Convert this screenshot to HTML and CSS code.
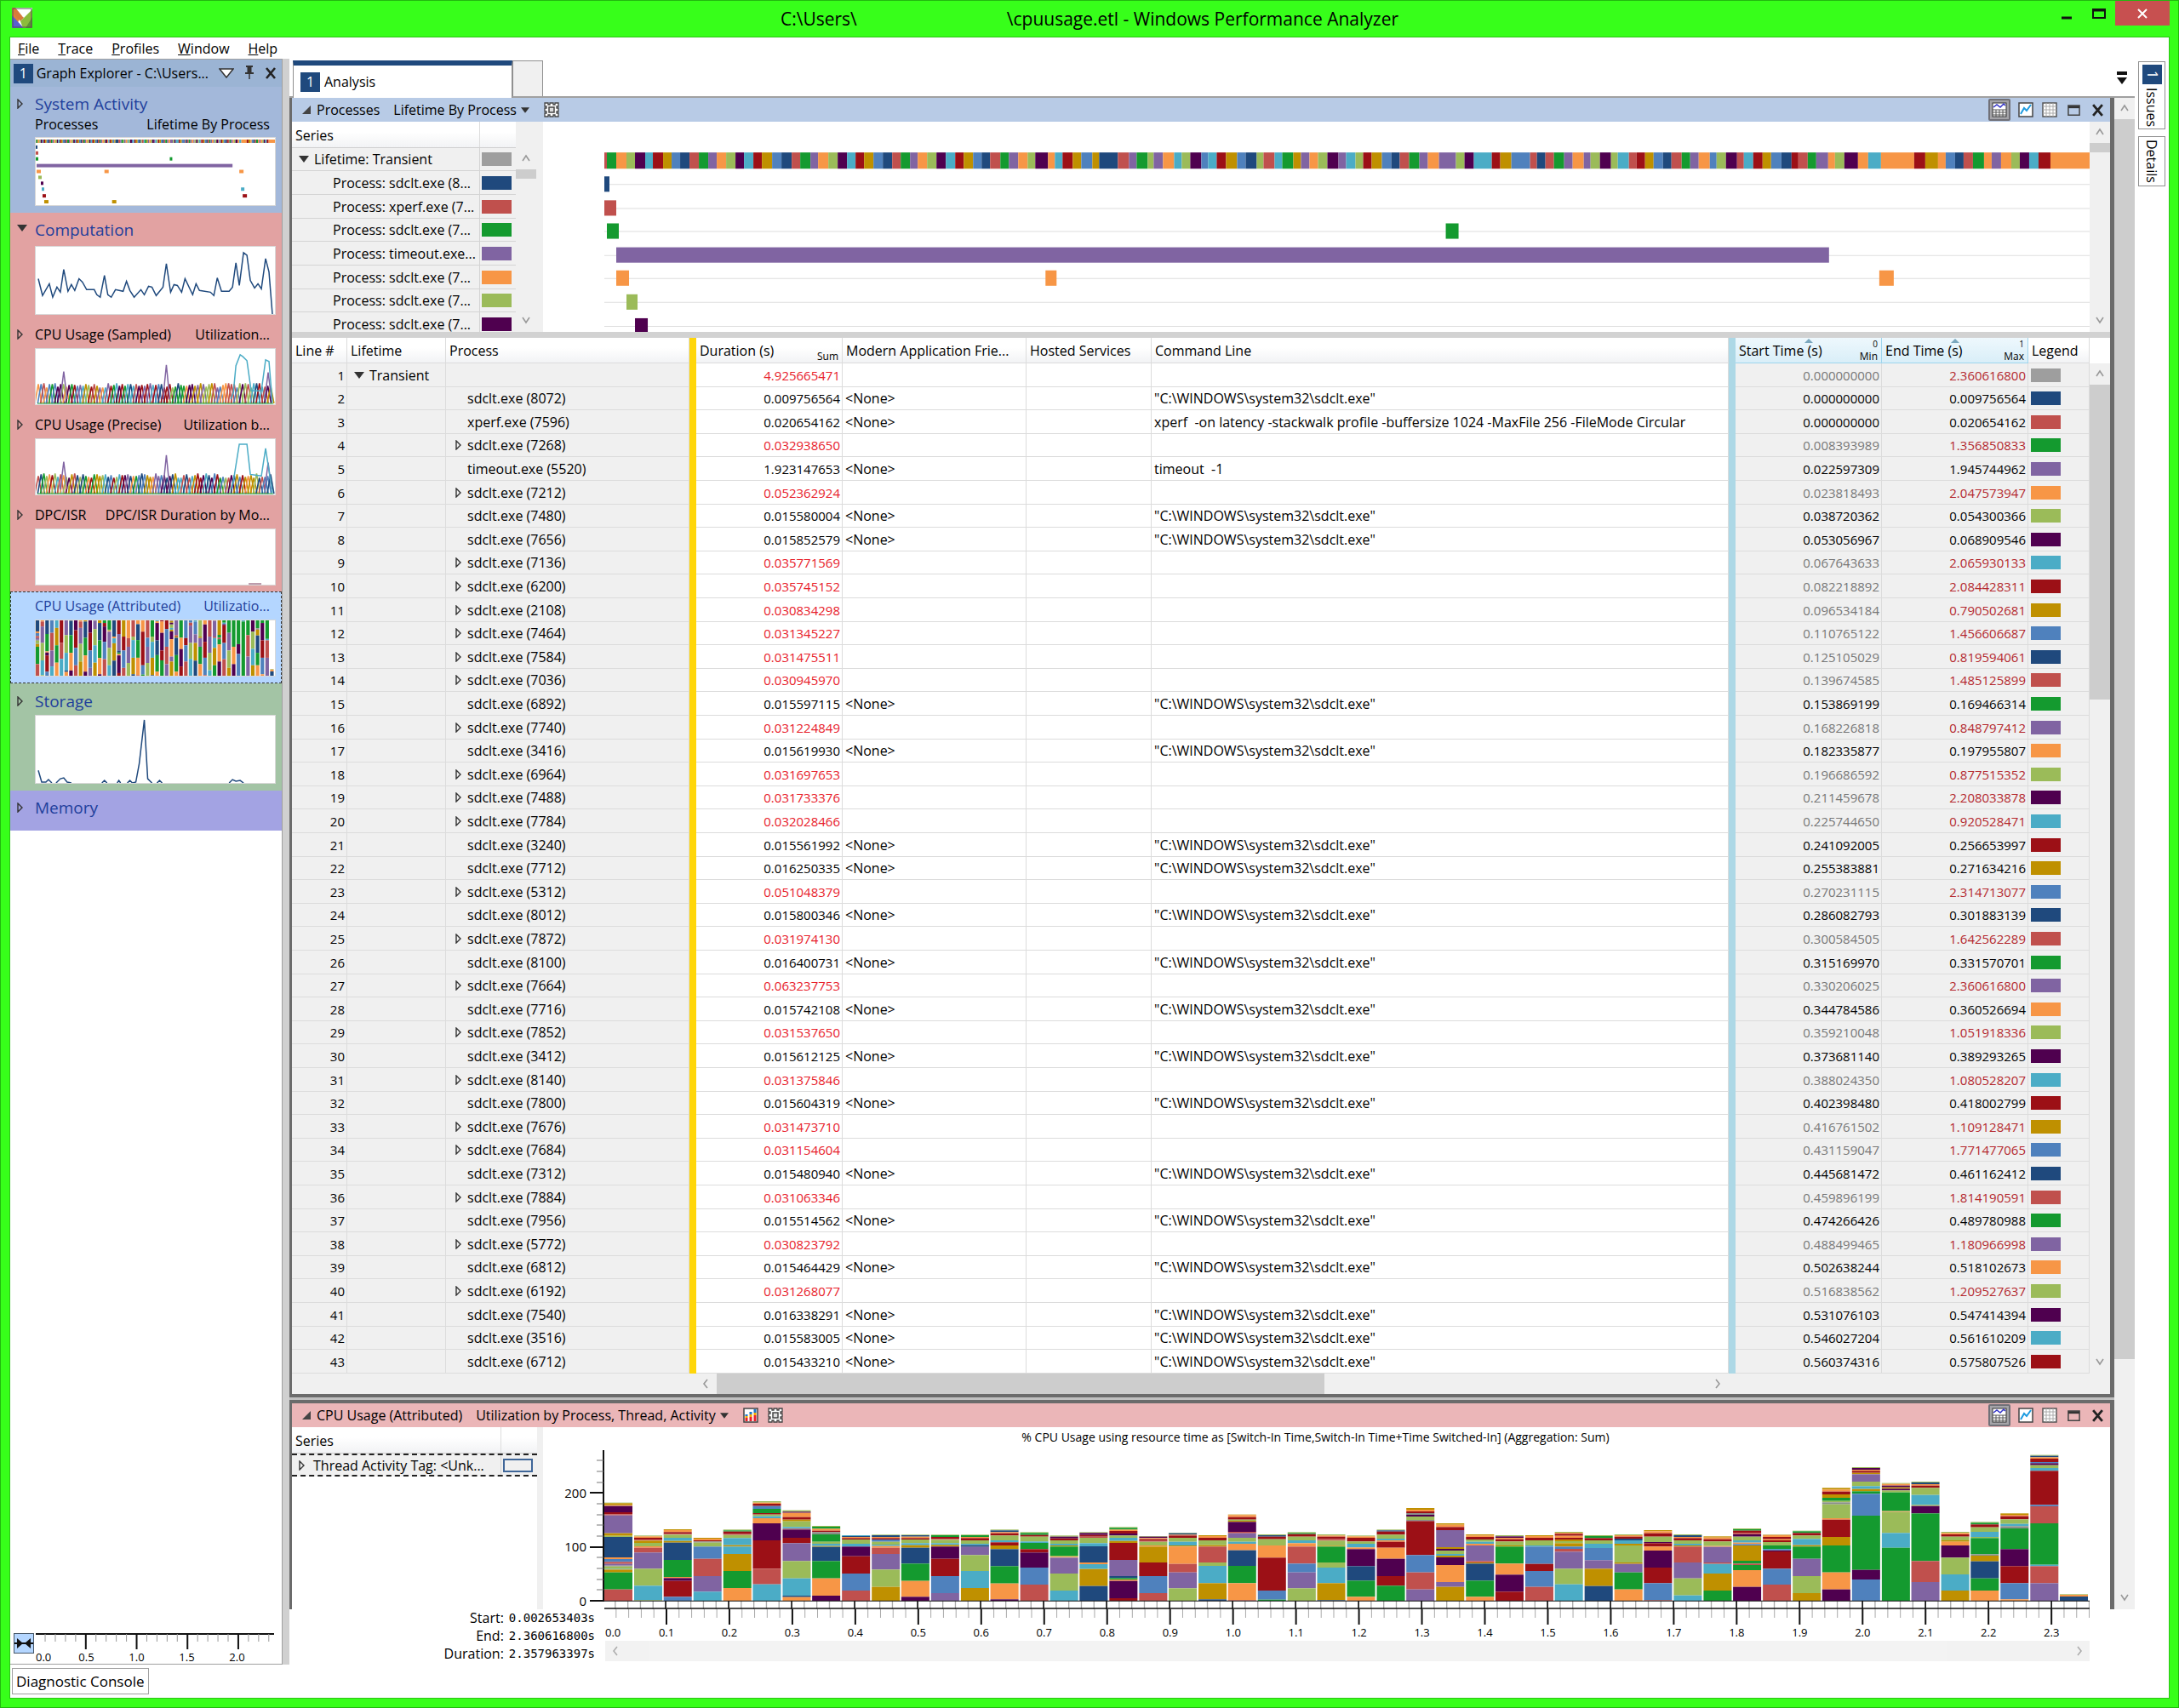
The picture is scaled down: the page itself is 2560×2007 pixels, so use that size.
FILE: index.html
```html
<!DOCTYPE html>
<html lang="en">
<head>
    <meta charset="UTF-8">
    <meta name="viewport" content="width=device-width, initial-scale=1.0">
    <title>Windows Performance Analyzer</title>
    <link rel="stylesheet" href="styles.css">
</head>
<body>
    <svg class="defs" aria-hidden="true">
        <symbol id="i-closed" viewBox="0 0 8 12"><path d="M1 1V11L6 6Z" fill="none" stroke="#333" stroke-width="1.4"/></symbol>
        <symbol id="i-open" viewBox="0 0 12 8"><path d="M0 0H12L6 8Z" fill="#333"/></symbol>
        <symbol id="i-corner" viewBox="0 0 10 10"><path d="M10 0V10H0Z" fill="#444"/></symbol>
        <symbol id="i-up" viewBox="0 0 12 12"><path d="M2 9L6 3L10 9" fill="none" stroke="#999" stroke-width="1.6"/></symbol>
        <symbol id="i-down" viewBox="0 0 12 12"><path d="M2 3L6 9L10 3" fill="none" stroke="#999" stroke-width="1.6"/></symbol>
        <symbol id="i-left" viewBox="0 0 12 12"><path d="M8 1L4 6L8 11" fill="none" stroke="#999" stroke-width="1.6"/></symbol>
        <symbol id="i-right" viewBox="0 0 12 12"><path d="M4 1L8 6L4 11" fill="none" stroke="#999" stroke-width="1.6"/></symbol>
        <symbol id="i-x" viewBox="0 0 14 14"><path d="M2 1L12 13M12 1L2 13" stroke="#222" stroke-width="2.6"/></symbol>
        <symbol id="i-gear" viewBox="0 0 18 18">
            <path d="M1 1H5V3H7V1H11V3H13V1H17V5H15V7H17V11H15V13H17V17H13V15H11V17H7V15H5V17H1V13H3V11H1V7H3V5H1Z" fill="#fff" stroke="#444" stroke-width="1.3"/>
            <rect x="6" y="6" width="6" height="6" fill="#ddd" stroke="#444" stroke-width="1.5"/>
        </symbol>
        <symbol id="i-both" viewBox="0 0 18 18">
            <rect x="1" y="1" width="16" height="16" fill="#fff" stroke="#333"/>
            <path d="M1 9H17M1 12H17M1 15H17M5 9V17M9 9V17M13 9V17" stroke="#555"/>
            <path d="M2 6L6 3L10 6L14 2L16 4" fill="none" stroke="#3232c8" stroke-width="1.5"/>
        </symbol>
        <symbol id="i-graph" viewBox="0 0 18 18">
            <rect x="1" y="1" width="16" height="16" fill="#fff" stroke="#444" stroke-width="1.5"/>
            <path d="M3 14L7 7L10 10L15 3" fill="none" stroke="#1e9be0" stroke-width="2"/>
        </symbol>
        <symbol id="i-table" viewBox="0 0 18 18">
            <rect x="1" y="1" width="16" height="16" fill="#fff" stroke="#555" stroke-width="1.5"/>
            <path d="M1 5H17M1 9H17M1 13H17M5 1V17M9 1V17M13 1V17" stroke="#aaa"/>
        </symbol>
        <symbol id="i-max" viewBox="0 0 16 16">
            <path d="M1 2H15V14H1Z" fill="none" stroke="#444" stroke-width="1.6"/>
            <path d="M1 4H15" stroke="#333" stroke-width="3"/>
        </symbol>
        <symbol id="i-bars" viewBox="0 0 18 18">
            <rect x="1" y="1" width="16" height="16" fill="#fff" stroke="#444" stroke-width="1.5"/>
            <path d="M4 16V12M9 16V11M14 16V9" stroke="#e8202a" stroke-width="3"/>
            <path d="M4 12V10M9 11V8M14 9V6" stroke="#f5a800" stroke-width="3"/>
            <path d="M4 10V8M9 8V5M14 6V2" stroke="#1e78c8" stroke-width="3"/>
        </symbol>
    </svg>

    <header class="titlebar">
        <svg class="logo" viewBox="0 0 24 24">
            <rect width="24" height="24" fill="#fff"/>
            <path d="M0 3L9 13L4 24H0Z" fill="#e08038"/>
            <path d="M0 9L14 24H0Z" fill="#5a5fd0"/>
            <path d="M4 0L14 12L10 16L0 5V0Z" fill="#d87a3c"/>
            <path d="M24 2V24H13L10 16Z" fill="#8cbb3c"/>
            <path d="M24 11V24H16Z" fill="#5f8f34"/>
            <path d="M5 0H22L13 11Z" fill="#fff"/>
            <rect x="1" y="1" width="22" height="22" fill="none" stroke="#555"/>
        </svg>
        <h1 class="title"><span>C:\Users\</span><span>\cpuusage.etl - Windows Performance Analyzer</span></h1>
        <div class="window-buttons">
            <button class="win-btn" aria-label="Minimize"><svg width="16" height="16"><path d="M2 13H14" stroke="#111" stroke-width="3"/></svg></button>
            <button class="win-btn" aria-label="Maximize"><svg width="16" height="12"><path d="M1 1H15V11H1Z" fill="none" stroke="#111" stroke-width="2"/><path d="M1 2H15" stroke="#111" stroke-width="3"/></svg></button>
            <button class="win-btn win-close" aria-label="Close"><svg width="14" height="12"><path d="M2 1L12 11M12 1L2 11" stroke="#fff" stroke-width="2"/></svg></button>
        </div>
    </header>

    <div class="window">
        <nav class="menu">
            <button><u>F</u>ile</button>
            <button><u>T</u>race</button>
            <button><u>P</u>rofiles</button>
            <button><u>W</u>indow</button>
            <button><u>H</u>elp</button>
        </nav>

        <div class="main">
            <aside class="explorer">
                <div class="explorer-head">
                    <span class="badge">1</span>
                    <h2>Graph Explorer - C:\Users...</h2>
                    <button aria-label="Options"><svg width="18" height="12"><path d="M1 1H17L9 11Z" fill="#fff" stroke="#333" stroke-width="1.5"/></svg></button>
                    <button aria-label="Pin"><svg width="12" height="18"><path d="M4 2H8V8H4Z" fill="#333" stroke="#333"/><path d="M2 1H10M1 9H11" stroke="#333" stroke-width="2"/><path d="M6 9V16" stroke="#333" stroke-width="1.5"/></svg></button>
                    <button aria-label="Close"><svg width="14" height="14"><use href="#i-x"/></svg></button>
                </div>
                <section class="group system">
                    <h3><svg class="closed"><use href="#i-closed"/></svg>System Activity</h3>
                    <div class="caption"><span>Processes</span><span>Lifetime By Process</span></div>
                    <svg class="thumb tall" id="thumbLifetime" viewBox="0 0 282 80" preserveAspectRatio="none"></svg>
                </section>
                <section class="group computation">
                    <h3><svg class="open"><use href="#i-open"/></svg>Computation</h3>
                    <svg class="thumb tall" viewBox="0 0 282 80" preserveAspectRatio="none">
                        <polyline class="spark" points="3,38 8,58 16,44 20,60 25,48 29,54 33,27 38,53 42,45 46,52 51,38 55,42 60,51 69,51 72,57 76,60 81,34 85,57 89,60 94,51 103,53 107,41 111,52 116,60 124,51 128,57 133,47 137,48 142,58 150,48 154,20 159,54 163,45 167,46 172,54 176,38 185,57 189,44 193,52 206,54 210,58 214,37 219,53 228,53 232,48 236,19 240,46 245,7 249,10 253,40 258,49 262,44 266,50 271,14 275,30 279,80"/>
                    </svg>
                    <div class="caption"><svg class="closed"><use href="#i-closed"/></svg><span>CPU Usage (Sampled)</span><span>Utilization...</span></div>
                    <svg class="thumb" id="thumbSampled" viewBox="0 0 282 66" preserveAspectRatio="none"></svg>
                    <div class="caption"><svg class="closed"><use href="#i-closed"/></svg><span>CPU Usage (Precise)</span><span>Utilization b...</span></div>
                    <svg class="thumb" id="thumbPrecise" viewBox="0 0 282 66" preserveAspectRatio="none"></svg>
                    <div class="caption"><svg class="closed"><use href="#i-closed"/></svg><span>DPC/ISR</span><span>DPC/ISR Duration by Mo...</span></div>
                    <svg class="thumb" viewBox="0 0 282 66" preserveAspectRatio="none"><path d="M251 65H266" stroke="#b9a" stroke-width="2"/></svg>
                </section>
                <section class="group selected">
                    <div class="caption"><span>CPU Usage (Attributed)</span><span>Utilizatio...</span></div>
                    <svg class="thumb" id="thumbAttributed" viewBox="0 352 5232 191" preserveAspectRatio="none"></svg>
                </section>
                <section class="group storage">
                    <h3><svg class="closed"><use href="#i-closed"/></svg>Storage</h3>
                    <svg class="thumb tall" viewBox="0 0 282 80" preserveAspectRatio="none">
                        <polyline class="spark" points="3,65 7,79 12,79 15,76 19,80"/>
                        <polyline class="spark" points="24,80 29,75 33,74 37,79 42,80"/>
                        <path class="spark" d="M78 80L81 77L84 80M96 80L98 77L100 80M108 80L111 77L114 80M143 80L146 77L149 80"/>
                        <polyline class="spark" points="114,80 118,79 122,57 128,5 132,75 137,80"/>
                        <polyline class="spark" points="228,80 232,76 236,78 241,77 245,80"/>
                    </svg>
                </section>
                <section class="group memory">
                    <h3><svg class="closed"><use href="#i-closed"/></svg>Memory</h3>
                </section>
                <div class="mini-axis">
                    <button aria-label="Fit to range"><svg width="22" height="22"><path d="M0 11H22" stroke="#111" stroke-width="2"/><path d="M3 5L10 11L3 17ZM19 5L12 11L19 17Z" fill="#111"/></svg></button>
                    <div class="mini-scale">
                        <svg id="miniTicks" viewBox="0 0 279 20" preserveAspectRatio="none"></svg>
                        <div class="mini-labels"><span>0.0</span><span>0.5</span><span>1.0</span><span>1.5</span><span>2.0</span></div>
                    </div>
                </div>
            </aside>
            <div class="splitter"></div>

            <main class="workspace">
                <div class="tabs">
                    <button class="tab"><span class="badge">1</span>Analysis</button>
                    <button class="tab tab-new" aria-label="New tab"></button>
                    <button class="tab-list" aria-label="Tab list"><svg width="12" height="16"><path d="M0 2H12" stroke="#111" stroke-width="4"/><path d="M0 7H12L6 15Z" fill="#111"/></svg></button>
                </div>
                <div class="desk">
                    <div class="panes">
                        <section class="pane">
                            <div class="pane-head blue">
                                <svg class="corner"><use href="#i-corner"/></svg>
                                <h2>Processes</h2>
                                <button class="preset">Lifetime By Process<svg><use href="#i-open"/></svg></button>
                                <button class="icon" aria-label="Settings"><svg><use href="#i-gear"/></svg></button>
                                <div class="tools">
                                    <button class="icon on" aria-label="Graph and table"><svg><use href="#i-both"/></svg></button>
                                    <button class="icon" aria-label="Graph"><svg><use href="#i-graph"/></svg></button>
                                    <button class="icon" aria-label="Table"><svg><use href="#i-table"/></svg></button>
                                    <button class="icon" aria-label="Maximize"><svg><use href="#i-max"/></svg></button>
                                    <button class="icon" aria-label="Close"><svg><use href="#i-x"/></svg></button>
                                </div>
                            </div>
                            <div class="graph lifetime">
                                <div class="series">
                                    <div class="series-head"><span>Series</span><span></span></div>
                                    <ul id="seriesList"></ul>
                                </div>
                                <div class="vscroll list-scroll"><svg><use href="#i-up"/></svg><span class="grip"></span><svg><use href="#i-down"/></svg></div>
                                <div class="gutter"></div>
                                <svg class="plot" id="lifetimePlot" viewBox="0 0 1744 246" preserveAspectRatio="none"></svg>
                                <div class="vscroll"><svg><use href="#i-up"/></svg><span class="grip"></span><svg><use href="#i-down"/></svg></div>
                            </div>
                            <div class="divider"></div>
                            <div class="grid">
                                <table>
                                    <colgroup>
                                        <col class="w-line"><col class="w-life"><col class="w-proc"><col class="w-bar">
                                        <col class="w-num"><col class="w-modern"><col class="w-hosted"><col>
                                        <col class="w-bar"><col class="w-num"><col class="w-num"><col class="w-legend">
                                    </colgroup>
                                    <thead>
                                        <tr>
                                            <th>Line #</th><th>Lifetime</th><th>Process</th><td class="gold"></td>
                                            <th>Duration (s)<small>Sum</small></th><th>Modern Application Frie...</th><th>Hosted Services</th><th>Command Line</th>
                                            <td class="sky"></td>
                                            <th class="sorted">Start Time (s)<sup>0</sup><small>Min</small></th>
                                            <th class="sorted">End Time (s)<sup>1</sup><small>Max</small></th>
                                            <th>Legend</th>
                                        </tr>
                                    </thead>
                                    <tbody id="rows"></tbody>
                                </table>
                                <div class="vscroll table-scroll"><svg><use href="#i-up"/></svg><span class="grip"></span><svg><use href="#i-down"/></svg></div>
                            </div>
                            <div class="hscroll"><svg><use href="#i-left"/></svg><span class="track"><span class="grip"></span></span><svg><use href="#i-right"/></svg></div>
                        </section>

                        <section class="pane">
                            <div class="pane-head pink">
                                <svg class="corner"><use href="#i-corner"/></svg>
                                <h2>CPU Usage (Attributed)</h2>
                                <button class="preset">Utilization by Process, Thread, Activity<svg><use href="#i-open"/></svg></button>
                                <button class="icon" aria-label="Chart type"><svg><use href="#i-bars"/></svg></button>
                                <button class="icon" aria-label="Settings"><svg><use href="#i-gear"/></svg></button>
                                <div class="tools">
                                    <button class="icon on" aria-label="Graph and table"><svg><use href="#i-both"/></svg></button>
                                    <button class="icon" aria-label="Graph"><svg><use href="#i-graph"/></svg></button>
                                    <button class="icon" aria-label="Table"><svg><use href="#i-table"/></svg></button>
                                    <button class="icon" aria-label="Maximize"><svg><use href="#i-max"/></svg></button>
                                    <button class="icon" aria-label="Close"><svg><use href="#i-x"/></svg></button>
                                </div>
                            </div>
                            <div class="graph usage">
                                <div class="series">
                                    <div class="series-head"><span>Series</span><span></span></div>
                                    <ul>
                                        <li class="focus"><span class="name"><svg class="closed"><use href="#i-closed"/></svg>Thread Activity Tag: &lt;Unk...</span><span class="swatch hollow"></span></li>
                                    </ul>
                                </div>
                                <div class="strip"></div>
                                <div class="y-axis">
                                    <span>200</span><span>100</span><span>0</span>
                                    <svg id="yTicks" width="20" height="191"></svg>
                                </div>
                                <div class="chart">
                                    <h4>% CPU Usage using resource time as [Switch-In Time,Switch-In Time+Time Switched-In] (Aggregation: Sum)</h4>
                                    <svg id="usagePlot" viewBox="0 0 5232 573" preserveAspectRatio="none"></svg>
                                </div>
                                <div class="end-gap"></div>
                            </div>
                        </section>
                    </div>
                    <div class="vscroll desk-scroll"><svg><use href="#i-up"/></svg><span class="grip"></span><svg><use href="#i-down"/></svg></div>
                </div>

                <footer class="timeline">
                    <dl>
                        <dt>Start:</dt><dd>0.002653403s</dd>
                        <dt>End:</dt><dd>2.360616800s</dd>
                        <dt>Duration:</dt><dd>2.357963397s</dd>
                    </dl>
                    <div class="scale">
                        <svg id="xTicks" viewBox="0 0 1744 18" preserveAspectRatio="none"></svg>
                        <div class="x-labels" id="xLabels"></div>
                        <div class="hscroll time-scroll"><svg><use href="#i-left"/></svg><span></span><svg><use href="#i-right"/></svg></div>
                    </div>
                </footer>
            </main>

            <div class="rail">
                <button><span class="badge">1</span>Issues</button>
                <button>Details</button>
            </div>
        </div>

        <div class="status"><button>Diagnostic Console</button></div>
    </div>
    <script src="script.js"></script>
</body>
</html>
```
FILE: styles.css
```css
* {
    box-sizing: border-box;
}
body {
    margin: 0;
    min-height: 100vh;
    display: flex;
    flex-direction: column;
    padding: 0 11px 11px;
    background-color: #37ff1a;
    box-shadow: inset 0 0 0 1px #22b80f;
    font-family: "Open Sans", "Noto Sans", sans-serif;
    font-size: 16px;
    line-height: 20px;
    color: #000;
}
h1, h2, h3, h4, ul, dl, dd {
    margin: 0;
    padding: 0;
    font-size: inherit;
    font-weight: normal;
    list-style: none;
}
button {
    display: inline-flex;
    align-items: center;
    justify-content: center;
    padding: 0;
    border: none;
    background: none;
    font: inherit;
    color: inherit;
    white-space: nowrap;
}
svg {
    display: block;
    flex-shrink: 0;
}
.defs {
    position: absolute;
    width: 0;
    height: 0;
}

/* title bar */
.titlebar {
    display: grid;
    grid-template-columns: 150px 1fr 150px;
    height: 43px;
}
.logo {
    width: 24px;
    height: 24px;
    margin: 9px 3px;
}
.title {
    display: flex;
    justify-content: center;
    gap: 176px;
    padding-top: 8px;
    font-size: 21px;
    line-height: 28px;
    white-space: nowrap;
}
.window-buttons {
    display: flex;
    justify-content: flex-end;
    padding-top: 1px;
}
.win-btn {
    width: 38px;
    height: 29px;
}
.win-close {
    width: 64px;
    background-color: #c75050;
}

.window {
    flex: 1;
    display: flex;
    flex-direction: column;
    background-color: #fff;
    border: 1px solid #2cc416;
}
.menu {
    display: flex;
    gap: 22px;
    height: 25px;
    padding-left: 9px;
}
.main {
    flex: 1;
    display: flex;
}
.badge {
    width: 23px;
    height: 23px;
    background-color: #1f497d;
    color: #fff;
    font-size: 16px;
    line-height: 23px;
    text-align: center;
}

/* graph explorer */
.explorer {
    width: 320px;
    display: flex;
    flex-direction: column;
    border: 1px solid #a0a0a0;
    border-left: none;
}
.explorer-head {
    display: flex;
    align-items: center;
    gap: 12px;
    height: 32px;
    padding: 0 6px 0 4px;
    background-color: #9bb4d4;
}
.explorer-head h2 {
    flex: 1;
    margin-left: -8px;
    white-space: nowrap;
}
.group {
    position: relative;
    padding: 4px 7px 8px 29px;
}
.group h3 {
    height: 32px;
    font-size: 19px;
    line-height: 32px;
    color: #1f3f9c;
}
.group .closed,
.group .open {
    position: absolute;
    left: 8px;
    margin-top: 10px;
}
.closed {
    width: 8px;
    height: 12px;
}
.open {
    width: 12px;
    height: 8px;
}
.caption {
    display: flex;
    justify-content: space-between;
    height: 32px;
    padding-right: 7px;
    line-height: 32px;
    white-space: nowrap;
}
.thumb {
    width: 100%;
    height: 67px;
    margin-bottom: 7px;
    background-color: #fff;
    border: 1px solid #d8d8d8;
}
.tall {
    height: 81px;
}
.spark {
    fill: none;
    stroke: #1f497d;
    stroke-width: 1.5;
}
.system {
    background-color: #a3b8da;
}
.system h3 {
    height: 30px;
}
.system .caption {
    height: 25px;
    line-height: 20px;
}
.system .thumb {
    margin-bottom: 0;
}
.computation {
    padding-bottom: 0;
    background-color: #e2a2a2;
}
.computation h3 {
    height: 35px;
}
.selected {
    padding: 0 6px 0 28px;
    background-color: #b4d6ff;
    border: 1px dashed #333;
    color: #1f3f9c;
}
.storage {
    padding-top: 5px;
    padding-bottom: 1px;
    background-color: #a3c4a5;
}
.memory {
    height: 47px;
    background-color: #a3a3e3;
}
.mini-axis {
    display: flex;
    gap: 2px;
    margin-top: auto;
    padding: 0 9px 0 4px;
}
.mini-axis button {
    width: 24px;
    height: 24px;
    background-color: #b4d6ff;
    border: 1px solid #456;
}
.mini-scale {
    flex: 1;
}
.mini-scale svg {
    width: 100%;
    height: 20px;
}
.mini-labels {
    display: grid;
    grid-template-columns: 30px 59px 59px 59px 59px;
    font-size: 13px;
    line-height: 16px;
    text-align: center;
}
.mini-labels span:first-child {
    text-align: left;
}
.splitter {
    width: 8px;
    background-color: #d0d0d0;
}

/* workspace */
.workspace {
    flex: 1;
    min-width: 0;
}
.tabs {
    display: flex;
    height: 46px;
    padding: 2px 9px 0 4px;
    border-bottom: 2px solid #a0a0a0;
}
.tab {
    width: 258px;
    height: 44px;
    justify-content: flex-start;
    gap: 5px;
    padding-left: 8px;
    background-color: #fff;
    border: 1px solid #909090;
    border-top: 6px solid #1f497d;
    border-bottom: none;
}
.tab-new {
    width: 36px;
    height: 42px;
    border-top: 1px solid #909090;
    background-color: #f0f0f0;
}
.tab-list {
    margin-left: auto;
}
.desk {
    display: flex;
}
.panes {
    flex: 1;
    min-width: 0;
    display: flex;
    flex-direction: column;
    gap: 3px;
    background-color: #c0c0c0;
}
.pane {
    border: 4px solid #6b6b6b;
    border-right-width: 5px;
    border-left-width: 3px;
    background-color: #fff;
}
.pane:first-child {
    border-top: none;
}
.pane:last-child {
    border-bottom: none;
}
.pane-head {
    display: flex;
    align-items: center;
    gap: 16px;
    height: 28px;
    padding: 0 5px 0 12px;
}
.blue {
    background-color: #b8cbe6;
}
.pink {
    background-color: #ebb6b8;
}
.corner {
    width: 10px;
    height: 10px;
    margin-right: -9px;
}
.preset {
    gap: 5px;
}
.preset svg {
    width: 10px;
    height: 7px;
}
.icon {
    width: 20px;
    height: 26px;
}
.icon svg {
    width: 18px;
    height: 18px;
}
.pane-head > .icon + .icon {
    margin-left: -7px;
}
.icon.on {
    width: 26px;
    background-color: #a4a4a8;
    border: 2px solid #707078;
    border-radius: 2px;
}
.tools {
    display: flex;
    gap: 8px;
    margin-left: auto;
}
.tools .icon:nth-child(n+4) svg {
    width: 15px;
    height: 15px;
}
.graph {
    display: flex;
}
.series {
    width: 263px;
    overflow: hidden;
}
.series-head {
    display: flex;
    height: 31px;
    border-bottom: 1px solid #d0d0d0;
    background-image: linear-gradient(#fff 40%, #f2f3f5);
    line-height: 32px;
}
.series-head span {
    flex-shrink: 0;
    width: 221px;
    padding-left: 4px;
    border-right: 1px solid #ddd;
}
.series-head span:last-child {
    width: 42px;
    border: none;
}
.series li {
    display: flex;
    align-items: center;
    height: 28px;
    background-color: #f0f0f0;
    border-bottom: 1px solid #d4d4d4;
}
.series li:nth-child(3n+1) {
    height: 27px;
}
.series .name {
    display: flex;
    flex-shrink: 0;
    align-items: center;
    gap: 6px;
    width: 221px;
    height: 100%;
    padding-left: 8px;
    border-right: 1px solid #d4d4d4;
    white-space: nowrap;
}
.series .child {
    padding-left: 48px;
}
.swatch {
    display: block;
    width: 35px;
    height: 16px;
    margin-left: 2px;
}
.vscroll {
    display: flex;
    flex-direction: column;
    align-items: center;
    width: 24px;
    padding: 6px 0 8px;
    background-color: #f0f0f0;
}
.vscroll svg {
    width: 12px;
    height: 12px;
}
.vscroll svg:last-child {
    margin-top: auto;
}
.vscroll .grip {
    width: 100%;
    height: 11px;
    margin-top: 7px;
    background-color: #cdcdcd;
}
.lifetime {
    height: 247px;
}
.list-scroll {
    width: 32px;
    padding-top: 37px;
    padding-right: 8px;
}
.gutter {
    width: 72px;
}
.plot {
    flex: 1;
    min-width: 0;
    height: 247px;
}
.divider {
    height: 7px;
    background-color: #d2d2d2;
}

/* data table */
.grid {
    display: flex;
}
table {
    flex: 1;
    min-width: 0;
    width: 100%;
    table-layout: fixed;
    border-collapse: separate;
    border-spacing: 0;
    line-height: 20px;
}
.w-line { width: 65px; }
.w-life { width: 116px; }
.w-proc { width: 286px; }
.w-bar { width: 8px; }
.w-num { width: 172px; }
.w-modern { width: 216px; }
.w-hosted { width: 147px; }
.w-legend { width: 72px; }
th, td {
    padding: 0 2px 0 3px;
    border-right: 1px solid #dcdcdc;
    border-bottom: 1px solid #dcdcdc;
    font-weight: normal;
    text-align: left;
    white-space: nowrap;
    overflow: hidden;
}
th {
    position: relative;
    height: 30px;
    padding: 0 0 0 4px;
    background-image: linear-gradient(#fff 40%, #f2f3f5);
}
th small, th sup {
    position: absolute;
    right: 4px;
    bottom: 0;
    font-size: 12px;
    line-height: 14px;
}
th sup {
    top: 0;
    font-size: 10px;
}
.sorted {
    background-image: linear-gradient(#eef8fd, #d9eef8);
    border-color: #9fd5ee;
}
.sorted::before {
    content: "";
    position: absolute;
    left: 50%;
    top: 1px;
    margin-left: -5px;
    border: 5px solid transparent;
    border-top: none;
    border-bottom-color: #7ba7bd;
}
tbody td {
    height: 28px;
}
tbody tr:nth-child(5n+2) td,
tbody tr:nth-child(5n+4) td {
    height: 27px;
}
.side {
    background-color: #f0f0f0;
}
.num {
    font-size: 15px;
    text-align: right;
}
.gold, tbody .gold {
    padding: 0;
    border: none;
    background-color: #ffd60a;
}
.sky, tbody .sky {
    padding: 0;
    border: none;
    background-color: #add8e6;
}
.node {
    display: flex;
    align-items: center;
    gap: 6px;
    padding-left: 8px;
}
.node.leaf {
    padding-left: 22px;
}
.node.top {
    padding-left: 5px;
}
td .swatch {
    margin-left: 0;
}
.sum { color: #e8202a; }
.sum-start { color: #777; }
.sum-end { color: #b4282e; }
.table-scroll {
    margin-top: 30px;
}
.table-scroll .grip {
    height: 370px;
}
.hscroll {
    display: flex;
    align-items: center;
    height: 24px;
    padding: 0 455px 0 480px;
    background-color: #f0f0f0;
}
.hscroll svg {
    width: 12px;
    height: 12px;
}
.track {
    flex: 1;
    height: 100%;
    padding-left: 7px;
}
.track .grip {
    display: block;
    width: 61%;
    height: 100%;
    background-color: #cdcdcd;
}

/* cpu usage graph */
.usage {
    height: 214px;
}
.usage .series {
    width: 288px;
}
.usage .series-head span:first-child {
    width: 246px;
}
.usage .name {
    gap: 9px;
    width: 246px;
}
.series .focus {
    border-top: 2px dashed #222;
    border-bottom: 2px dashed #222;
    height: 30px;
}
.hollow {
    border: 2px solid #3f6698;
}
.strip {
    width: 7px;
    background-color: #f0f0f0;
}
.y-axis {
    position: relative;
    width: 72px;
    font-size: 15px;
}
.y-axis span {
    position: absolute;
    right: 21px;
    top: 67px;
}
.y-axis span:nth-child(2) {
    top: 130px;
}
.y-axis span:nth-child(3) {
    top: 194px;
}
.y-axis svg {
    position: absolute;
    right: 0;
    bottom: 0;
}
.chart {
    flex: 1;
    min-width: 0;
}
.chart h4 {
    height: 23px;
    font-size: 14px;
    line-height: 24px;
    text-align: center;
    padding-right: 74px;
}
.chart svg {
    width: 100%;
    height: 191px;
}
.end-gap {
    width: 24px;
}
.desk-scroll .grip {
    flex: 1;
    margin-bottom: 274px;
}

/* time axis */
.timeline {
    display: flex;
    padding-right: 53px;
}
.timeline dl {
    display: grid;
    grid-template-columns: 1fr auto;
    gap: 0 6px;
    width: 371px;
    padding-right: 12px;
    line-height: 21px;
    text-align: right;
}
.timeline dd {
    font-family: "DejaVu Sans Mono", monospace;
    font-size: 14px;
}
.scale {
    flex: 1;
    min-width: 0;
}
.scale > svg {
    width: 100%;
    height: 18px;
}
.x-labels {
    position: relative;
    height: 19px;
    font-size: 13px;
    line-height: 18px;
}
.x-labels span {
    position: absolute;
    transform: translateX(-50%);
}
.x-labels span:first-child {
    transform: none;
}
.time-scroll {
    justify-content: space-between;
    padding: 0 6px;
    opacity: 0.8;
}

/* right rail */
.rail {
    display: flex;
    flex-direction: column;
    gap: 8px;
    width: 40px;
    padding: 3px 4px 0 4px;
}
.rail button {
    writing-mode: vertical-rl;
    width: 32px;
    height: 80px;
    justify-content: flex-start;
    gap: 4px;
    padding-top: 3px;
    border: 1px solid #909090;
}
.rail button:last-child {
    height: 59px;
    justify-content: center;
    padding: 0;
}
.status {
    height: 39px;
    padding: 4px 2px;
}
.status button {
    height: 31px;
    padding: 0 4px;
    border: 1px solid #a0a0a0;
    font-size: 17px;
}
```
FILE: script.js
```js
const COLORS = {
    n: '#1f497d', r: '#c0504d', g: '#149a2f', p: '#8064a2', o: '#f79646', l: '#9bbb59',
    d: '#4f004f', c: '#4bacc6', m: '#9c1016', y: '#bf9000', b: '#4f81bd', k: '#8a8f8a'
};
const CYCLE = 'nrgpoldcmyb';

// "r0 g3 o14" -> [{color, at}]
function parse(text) {
    return text.split(' ').map(s => ({ color: COLORS[s[0]], at: Number(s.slice(1)) }));
}

function rect(x, y, w, h, fill) {
    return `<rect x="${x}" y="${y}" width="${w}" height="${h}" fill="${fill}"/>`;
}

function line(x1, y1, x2, y2, stroke, width) {
    return `<path d="M${x1} ${y1}L${x2} ${y2}" stroke="${stroke}" stroke-width="${width}"/>`;
}

function fill(id, html) {
    document.getElementById(id).innerHTML = html;
}

/* lifetime graph */
const STRIP = parse('r0 g3 o14 l26 d36 c48 m57 y69 b79 n89 r100 g111 p122 o132 l143 d154 c164 m175 y185 b197 n208 r220 g230 p242 o251 l263 d274 c285 m295 y305 b316 n327 r338 g348 p359 o368 l379 d390 c401 m412 y422 b433 n443 r453 g465 p475 o486 l497 d506 o521 c529 m538 y550 b560 y573 n581 r603 p616 g625 l638 p645 o656 c669 l678 d688 b701 c709 m719 y730 b743 n753 l766 r774 c787 g796 y809 p818 o828 l838 d849 p862 c871 l882 m891 y901 b913 n924 r934 g945 p957 o967 p980 l1000 d1010 c1021 m1042 y1052 b1065 r1087 n1095 r1105 g1115 p1127 o1137 p1150 l1158 d1169 l1182 c1190 r1203 m1212 y1222 b1232 n1243 r1253 g1265 p1275 o1285 b1298 l1306 d1317 r1330 c1338 m1349 y1360 b1370 n1382 m1394 r1402 g1413 p1423 o1437 l1445 d1456 o1472 c1484 o1499 m1538 y1551 o1566 b1575 n1586 r1596 g1607 o1620 p1629 o1640 l1652 d1662 c1673 m1684 o1698');

function strip(y, h, scale) {
    return STRIP.map((s, i) => {
        const end = STRIP[i + 1] ? STRIP[i + 1].at : 1744;
        return rect(s.at * scale, y, (end - s.at) * scale, h, s.color);
    }).join('');
}

const LANES = [
    ['n', [0, 6]],
    ['r', [0, 14]],
    ['g', [3, 14], [988, 15]],
    ['p', [14, 1424]],
    ['o', [14, 15], [518, 13], [1497, 17]],
    ['l', [26, 13]],
    ['d', [36, 15]]
];

let lifetime = strip(36, 19, 1);
LANES.forEach(([key, ...spans], i) => {
    const y = 73 + Math.round(i * 27.6);
    lifetime += line(0, y + 0.5, 1744, y + 0.5, '#dedede', 1);
    spans.forEach(([x, w]) => lifetime += rect(x, y - 9, w, 18, COLORS[key]));
});
fill('lifetimePlot', lifetime);

const THUMB_LANES = [
    ['n', [0, 2]], ['r', [0, 3]], ['g', [0, 3], [158, 3]], ['p', [1, 231]],
    ['o', [1, 5], [81, 5], [240, 5]], ['l', [3, 4]], ['d', [6, 3]], ['c', [7, 3], [242, 4]],
    ['m', [8, 4], [244, 5]], ['y', [10, 5], [90, 5]]
];
let thumb = strip(2, 4, 282 / 1744);
THUMB_LANES.forEach(([key, ...spans], i) => {
    spans.forEach(([x, w]) => thumb += rect(x, 9 + Math.round(i * 7.2), w, 4, COLORS[key]));
});
fill('thumbLifetime', thumb);

const SERIES = ['sdclt.exe (8...', 'xperf.exe (7...', 'sdclt.exe (7...', 'timeout.exe...', 'sdclt.exe (7...', 'sdclt.exe (7...', 'sdclt.exe (7...'];
fill('seriesList',
    `<li><span class="name"><svg class="open"><use href="#i-open"/></svg>Lifetime: Transient</span><span class="swatch" style="background-color: #9e9e9e"></span></li>` +
    SERIES.map((name, i) =>
        `<li><span class="name child">Process: ${name}</span><span class="swatch" style="background-color: ${COLORS[CYCLE[i]]}"></span></li>`
    ).join(''));

/* table: process, duration, start, end; "+" marks an expandable process */
const DATA = `sdclt.exe (8072)|0.009756564|0.000000000|0.009756564
xperf.exe (7596)|0.020654162|0.000000000|0.020654162
+sdclt.exe (7268)|0.032938650|0.008393989|1.356850833
timeout.exe (5520)|1.923147653|0.022597309|1.945744962
+sdclt.exe (7212)|0.052362924|0.023818493|2.047573947
sdclt.exe (7480)|0.015580004|0.038720362|0.054300366
sdclt.exe (7656)|0.015852579|0.053056967|0.068909546
+sdclt.exe (7136)|0.035771569|0.067643633|2.065930133
+sdclt.exe (6200)|0.035745152|0.082218892|2.084428311
+sdclt.exe (2108)|0.030834298|0.096534184|0.790502681
+sdclt.exe (7464)|0.031345227|0.110765122|1.456606687
+sdclt.exe (7584)|0.031475511|0.125105029|0.819594061
+sdclt.exe (7036)|0.030945970|0.139674585|1.485125899
sdclt.exe (6892)|0.015597115|0.153869199|0.169466314
+sdclt.exe (7740)|0.031224849|0.168226818|0.848797412
sdclt.exe (3416)|0.015619930|0.182335877|0.197955807
+sdclt.exe (6964)|0.031697653|0.196686592|0.877515352
+sdclt.exe (7488)|0.031733376|0.211459678|2.208033878
+sdclt.exe (7784)|0.032028466|0.225744650|0.920528471
sdclt.exe (3240)|0.015561992|0.241092005|0.256653997
sdclt.exe (7712)|0.016250335|0.255383881|0.271634216
+sdclt.exe (5312)|0.051048379|0.270231115|2.314713077
sdclt.exe (8012)|0.015800346|0.286082793|0.301883139
+sdclt.exe (7872)|0.031974130|0.300584505|1.642562289
sdclt.exe (8100)|0.016400731|0.315169970|0.331570701
+sdclt.exe (7664)|0.063237753|0.330206025|2.360616800
sdclt.exe (7716)|0.015742108|0.344784586|0.360526694
+sdclt.exe (7852)|0.031537650|0.359210048|1.051918336
sdclt.exe (3412)|0.015612125|0.373681140|0.389293265
+sdclt.exe (8140)|0.031375846|0.388024350|1.080528207
sdclt.exe (7800)|0.015604319|0.402398480|0.418002799
+sdclt.exe (7676)|0.031473710|0.416761502|1.109128471
+sdclt.exe (7684)|0.031154604|0.431159047|1.771477065
sdclt.exe (7312)|0.015480940|0.445681472|0.461162412
+sdclt.exe (7884)|0.031063346|0.459896199|1.814190591
sdclt.exe (7956)|0.015514562|0.474266426|0.489780988
+sdclt.exe (5772)|0.030823792|0.488499465|1.180966998
sdclt.exe (6812)|0.015464429|0.502638244|0.518102673
+sdclt.exe (6192)|0.031268077|0.516838562|1.209527637
sdclt.exe (7540)|0.016338291|0.531076103|0.547414394
sdclt.exe (3516)|0.015583005|0.546027204|0.561610209
sdclt.exe (6712)|0.015433210|0.560374316|0.575807526`.split('\n').map(r => r.split('|'));

const COMMANDS = {
    'xperf.exe (7596)': 'xperf&nbsp; -on latency -stackwalk profile -buffersize 1024 -MaxFile 256 -FileMode Circular',
    'timeout.exe (5520)': 'timeout&nbsp; -1'
};

function row(no, life, proc, group, dur, start, end, color) {
    const name = proc.replace('+', '');
    const command = group ? '' : COMMANDS[name] || '"C:\\WINDOWS\\system32\\sdclt.exe"';
    const arrow = proc[0] === '+' ? '<svg class="closed"><use href="#i-closed"/></svg>' : '';
    return `<tr>
        <td class="side num">${no}</td>
        <td class="side">${life}</td>
        <td class="side"><span class="node ${arrow ? '' : 'leaf'}">${arrow}${name}</span></td>
        <td class="gold"></td>
        <td class="num ${group ? 'sum' : ''}">${dur}</td>
        <td>${group ? '' : '&lt;None&gt;'}</td>
        <td></td>
        <td>${command}</td>
        <td class="sky"></td>
        <td class="side num ${group ? 'sum-start' : ''}">${start}</td>
        <td class="side num ${group ? 'sum-end' : ''}">${end}</td>
        <td class="side"><span class="swatch" style="background-color: ${color}"></span></td>
    </tr>`;
}

fill('rows',
    row(1, '<span class="node top"><svg class="open"><use href="#i-open"/></svg>Transient</span>', '', true, '4.925665471', '0.000000000', '2.360616800', '#9e9e9e') +
    DATA.map(([proc, dur, start, end], i) =>
        row(i + 2, '', proc, proc[0] === '+', dur, start, end, COLORS[CYCLE[i % 11]])
    ).join(''));

/* stacked bars, each segment listed from the top down, baseline at 543 */
const BASE = 543;
const BARS = `l197 y199 o206 d209 m231 r238 p242 y305 l314 n318 o390 b396 r406 p413 k419 l422 c431 y433 g443 r503
l313 o316 m321 r328 y331 l339 o351 r356 p373 l430 c490 l541
y291 o294 m301 r307 l310 c321 y332 n338 g399 o459 d463 m473 b529
y321 o324 m330 k334 l338 b352 r395 p456 c511
l292 g295 m299 r308 l311 c322 y347 c352 y378 g438 o498
l192 o197 m201 b209 g219 m234 l239 c245 o252 d270 m330 r430 c485
l224 d229 o233 m248 y257 l263 c283 r289 d292 m321 p340 l403 c464 n525 o530
l279 g282 o289 m296 k301 g309 l335 c342 y350 n353 g403 o464 d525
c312 n315 o318 m322 l327 c342 d352 m386 b447 r507
l310 n312 o318 m322 b327 l335 c345 o350 r356 p378 l433 y494
l310 n312 o317 m322 l327 c340 y347 n356 g412 o473 d529
l310 g312 m318 r325 l328 c340 y346 d352 m395 b456 p516
l310 g312 o318 m322 l330 c342 n347 p353 l382 c438 y498
l292 n295 o301 m305 l313 c330 m337 y348 n361 g421 o482 d538
l301 g304 m311 l317 c334 g339 m361 d373 b426 r486
l313 d317 m323 l330 c342 y348 g352 l384 o388 p391 l447 c507
l301 d304 m311 r317 l321 c340 n351 o408 c414 y431 n491
l283 g286 o292 m297 d306 l313 c321 y332 m339 p399 n456 g463 o468 d473 m534
l315 d317 o322 m326 r332 l335 o348 y352 m408 b456 r516
l303 n305 o310 m313 l321 c335 y348 o352 r413 p443 l499
y312 o315 m321 l330 y347 r352 l408 c420 y481 n538
y239 o241 m248 l257 y261 d265 r300 p305 l321 c335 o342 n365 g420 o481 r541
l309 n312 m317 l326 o348 m391 b507 g539
l301 g304 m308 l317 c330 o340 r352 b412 p443 l499
l309 o313 m317 r325 l331 y349 g352 l408 c426 y481 n541
l313 o316 m321 l334 c342 o355 d361 n421 g472 o529
l292 n295 m299 l310 c324 o330 m335 o356 d395 m456 g490
y216 o222 m228 k234 d240 l246 k258 m262 b382 r443 p503
y270 o275 m283 p294 y354 d360 l366 c378 y384 d390 o417 p477 y494
y309 o313 m318 l327 c335 o342 p348 r403 y408 n412 g472 o529
l312 d316 o321 m326 l334 y348 g352 o412 d451 m511
y312 o315 m321 l330 c348 b352 m413 b438 r494
l300 o303 m307 o314 m321 y327 l333 y340 b352 r360 p370 l430 c485
l312 g315 m322 l330 c342 b357 p400 y430 n491
l309 o312 m317 n324 c330 y342 l348 y408 p413 g443 o503
y294 o298 m305 l317 d336 m340 o352 d366 m426 b481 r541
l309 n312 o318 m322 l330 c342 y348 r352 p408 l464 c524
y316 o320 m326 l334 o350 p353 r408 c413 y447 g507
l288 g291 m296 r304 d309 l317 c330 o338 b343 y348 g402 r412 g417 o435 d494
l309 o311 m318 o326 m330 l336 g348 c360 d365 m369 b430 r486
l296 g298 m304 l313 c325 y347 g352 p395 l456 y516
y145 o151 m158 y168 g180 l191 k196 l203 o252 m257 y318 g348 o443 d503
l72 d75 o81 m85 y92 p97 l123 c139 y149 g157 b166 g243 d434 b468
l128 o131 d137 y143 d148 l154 g161 o227 l230 c304 g356
l123 n126 o132 m137 l145 c170 l205 d209 g235 r403 p477
l300 o304 m309 l317 y330 o335 d348 l391 c450 y507
l265 g268 m274 l284 c300 l318 g322 k379 y384 n404 g464 o507
y235 o240 m245 l256 c272 k280 g288 d361 m421 b481 o538
l29 n32 o37 m42 b54 d58 l65 c75 m85 b205 r210 g270 c416 r421 p481
l520 o522 n528`.split('\n').map(parse);

function bars(width) {
    const pitch = 5232 / BARS.length;
    return BARS.map((bar, i) => bar.map((s, j) => {
        const end = bar[j + 1] ? bar[j + 1].at : BASE;
        return rect(Math.round(i * pitch), s.at, width, end - s.at, s.color);
    }).join('')).join('');
}

const START = 0.002653403;
const SPAN = 2.357963397;

let plot = bars(99);
for (let t = 1; t < 119; t++) {
    const x = (t / 50 - START) / SPAN * 5232;
    const major = t % 5 === 0;
    if (x < 5232) plot += line(x, BASE, x, 573, major ? '#111' : '#aaa', major ? 5 : 4);
}
plot += line(0, BASE + 1, 5232, BASE + 1, '#111', 3) + line(0, 570, 5232, 570, '#111', 5);
fill('usagePlot', plot);
fill('thumbAttributed', bars(78));

let yTicks = line(19, 4, 19, 182, '#111', 2);
for (let i = 0; i < 14; i++) {
    const y = 181 - Math.round(i * 12.67);
    yTicks += i % 5 === 0 ? line(3, y, 19, y, '#111', 2) : line(11, y, 19, y, '#777', 1);
}
fill('yTicks', yTicks);

let xTicks = '';
let xLabels = '<span style="left: 0">0.0</span>';
for (let t = 1; t < 119; t++) {
    const at = (t / 50 - START) / SPAN;
    const major = t % 5 === 0;
    if (at > 1) continue;
    xTicks += line(at * 1744, 0, at * 1744, major ? 18 : 10, major ? '#111' : '#aaa', major ? 2 : 1);
    if (major) xLabels += `<span style="left: ${(at * 100).toFixed(2)}%">${(t / 50).toFixed(1)}</span>`;
}
fill('xTicks', xTicks);
fill('xLabels', xLabels);

/* explorer thumbnails */
function spikes(cyan, seed) {
    let out = '';
    for (let i = 0; i < 84; i++) {
        seed = (seed * 16807) % 2147483647;
        const x = 3 + i * 3.3;
        const top = 41 + seed % 6;
        const color = COLORS[CYCLE[(i * 3 + seed) % 11]];
        out += `<path d="M${x - 4} 65L${x} ${top}L${x + 4} 65" fill="none" stroke="${color}" stroke-width="1.6"/>`;
    }
    [[33, 27], [154, 19], [274, 28]].forEach(([x, y]) => {
        out += `<path d="M${x - 4} 60L${x} ${y}L${x + 4} 60" fill="none" stroke="${COLORS.p}" stroke-width="1.5"/>`;
    });
    return out + `<polyline points="${cyan}" fill="none" stroke="${COLORS.c}" stroke-width="1.5"/>` + line(2, 65, 280, 65, COLORS.g, 1);
}
fill('thumbSampled', spikes('230,60 233,52 236,20 241,7 244,9 249,14 254,50 266,50 271,13 275,15 279,64', 7));
fill('thumbPrecise', spikes('230,60 233,50 240,6 249,6 253,42 266,44 271,11 279,64', 21));

let mini = line(0, 1, 279, 1, '#111', 2);
for (let i = 0; i < 23; i++) {
    const x = 11 + i * 11.9;
    const major = i % 5 === 4;
    mini += line(x, 1, x, major ? 19 : 10, major ? '#111' : '#999', major ? 2 : 1);
}
fill('miniTicks', mini);
```
